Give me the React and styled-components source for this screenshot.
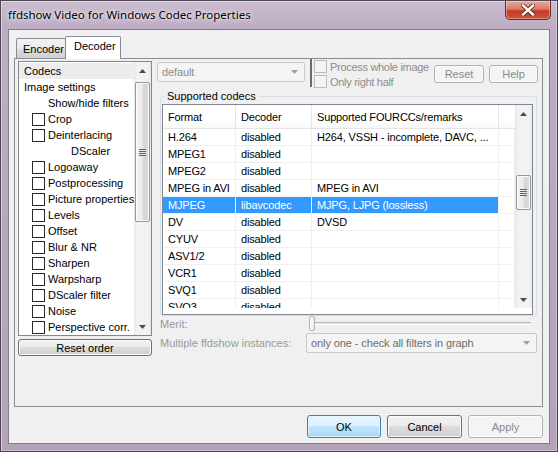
import React from 'react'
import styled, { createGlobalStyle, css } from 'styled-components'

const GlobalStyle = createGlobalStyle`
  html, body {
    margin: 0;
    padding: 0;
  }
  body {
    width: 558px;
    height: 452px;
    overflow: hidden;
    background: #b7a7bb;
    font-family: "Liberation Sans", Arial, sans-serif;
    font-size: 11px;
  }
  * {
    box-sizing: border-box;
  }
`

const leftItems = [
    { label: 'Codecs', level: 0, selected: true },
    { label: 'Image settings', level: 0 },
    { label: 'Show/hide filters', level: 1 },
    { label: 'Crop', check: true },
    { label: 'Deinterlacing', check: true },
    { label: 'DScaler', level: 2 },
    { label: 'Logoaway', check: true },
    { label: 'Postprocessing', check: true },
    { label: 'Picture properties', check: true },
    { label: 'Levels', check: true },
    { label: 'Offset', check: true },
    { label: 'Blur & NR', check: true },
    { label: 'Sharpen', check: true },
    { label: 'Warpsharp', check: true },
    { label: 'DScaler filter', check: true },
    { label: 'Noise', check: true },
    { label: 'Perspective corr.', check: true },
]

const codecs = [
    ['H.264', 'disabled', 'H264, VSSH - incomplete, DAVC, ...'],
    ['MPEG1', 'disabled', ''],
    ['MPEG2', 'disabled', ''],
    ['MPEG in AVI', 'disabled', 'MPEG in AVI'],
    ['MJPEG', 'libavcodec', 'MJPG, LJPG (lossless)', true],
    ['DV', 'disabled', 'DVSD'],
    ['CYUV', 'disabled', ''],
    ['ASV1/2', 'disabled', ''],
    ['VCR1', 'disabled', ''],
    ['SVQ1', 'disabled', ''],
    ['SVQ3', 'disabled', ''],
]

const columns = [73, 76, 187]

const Arrow = ({ up }) => (
    <svg width="7" height="4" viewBox="0 0 7 4">
        {up
            ? <polygon points="0,4 3.5,0 7,4" fill="#4a4a4a"/>
            : <polygon points="0,0 3.5,4 7,0" fill="#4a4a4a"/>}
    </svg>
)

const ScrollBar = ({ thumbTop, thumbHeight }) => (
    <Scroll>
        <ScrollButton><Arrow up/></ScrollButton>
        <ScrollTrack>
            <Thumb style={{ marginTop: thumbTop, height: thumbHeight }}>
                <Gripper/>
            </Thumb>
        </ScrollTrack>
        <ScrollButton><Arrow/></ScrollButton>
    </Scroll>
)

const DropArrow = () => (
    <svg width="7" height="4" viewBox="0 0 7 4">
        <polygon points="0,0 3.5,4 7,0" fill="#a0a0a0"/>
    </svg>
)

const CloseGlyph = () => (
    <svg width="14" height="12" viewBox="0 0 14 12">
        <path d="M2 1.5 L12 10.5 M12 1.5 L2 10.5" stroke="#5a2a24" strokeWidth="4.2" strokeLinecap="square"/>
        <path d="M2 1.5 L12 10.5 M12 1.5 L2 10.5" stroke="#ffffff" strokeWidth="2.4" strokeLinecap="square"/>
    </svg>
)

export default function App() {
    return (
        <>
            <GlobalStyle/>
            <Window>
                <TitleBar>
                    <Title>ffdshow Video for Windows Codec Properties</Title>
                    <CloseButton><CloseGlyph/></CloseButton>
                </TitleBar>
                <Client>
                    <Tabs>
                        <Tab>Encoder</Tab>
                        <Tab $active>Decoder</Tab>
                    </Tabs>
                    <Panel>
                        <LeftCol>
                            <ListBox>
                                <ListItems>
                                    {leftItems.map((it) => (
                                        <Item key={it.label} $level={it.check ? 'check' : it.level}
                                              $selected={it.selected}>
                                            {it.check && <CheckBox/>}
                                            {it.label}
                                        </Item>
                                    ))}
                                </ListItems>
                                <ScrollBar thumbTop={3} thumbHeight={140}/>
                            </ListBox>
                            <Button $size="small">Reset order</Button>
                        </LeftCol>
                        <RightCol>
                            <TopRow>
                                <Combo $width={148} $top={3}>
                                    <ComboText>default</ComboText>
                                    <DropArrow/>
                                </Combo>
                                <Separator/>
                                <CheckCol>
                                    <CheckRow><CheckBox $disabled/>Process whole image</CheckRow>
                                    <CheckRow><CheckBox $disabled/>Only right half</CheckRow>
                                </CheckCol>
                                <SmallButtons>
                                    <Button $variant="disabled" $size="top" $width={50}>Reset</Button>
                                    <Button $variant="disabled" $size="top" $width={49}>Help</Button>
                                </SmallButtons>
                            </TopRow>
                            <Group>
                                <Legend>Supported codecs</Legend>
                                <ListView>
                                    <ListArea>
                                        <Table>
                                            <HeaderRow>
                                                <HeaderCell $w={columns[0]}>Format</HeaderCell>
                                                <HeaderCell $w={columns[1]}>Decoder</HeaderCell>
                                                <HeaderCell $w={columns[2]}>Supported FOURCCs/remarks</HeaderCell>
                                                <HeaderCell $last/>
                                            </HeaderRow>
                                            {codecs.map(([f, d, r, sel]) => (
                                                <Row key={f}>
                                                    <Cell $w={columns[0]} $selected={sel}>{f}</Cell>
                                                    <Cell $w={columns[1]} $selected={sel}>{d}</Cell>
                                                    <Cell $w={columns[2]} $selected={sel}>{r}</Cell>
                                                    <Cell $last/>
                                                </Row>
                                            ))}
                                        </Table>
                                        <ScrollBar thumbTop={53} thumbHeight={35}/>
                                    </ListArea>
                                </ListView>
                            </Group>
                            <FieldRow $height={15}>
                                <FieldLabel $width={149}>Merit:</FieldLabel>
                                <Slider>
                                    <SliderThumb/>
                                    <Groove/>
                                </Slider>
                            </FieldRow>
                            <FieldRow $height={20} $gap={2}>
                                <FieldLabel $width={146}>Multiple ffdshow instances:</FieldLabel>
                                <Combo $width={231}>
                                    <ComboText $dark>only one - check all filters in graph</ComboText>
                                    <DropArrow/>
                                </Combo>
                            </FieldRow>
                        </RightCol>
                    </Panel>
                    <ButtonRow>
                        <Button $variant="default" $width={74}>OK</Button>
                        <Button $width={75}>Cancel</Button>
                        <Button $variant="disabled" $width={75}>Apply</Button>
                    </ButtonRow>
                </Client>
            </Window>
        </>
    )
}

const Window = styled.div`
  width: 558px;
  height: 452px;
  display: flex;
  flex-direction: column;
  border: 1px solid #4e4653;
  background: linear-gradient(to bottom, #cbbdd0 0, #bdacc3 28px, #b4a2b9 100%);
  box-shadow: inset 1px 1px 0 rgba(255, 255, 255, 0.45), inset -1px -1px 0 rgba(255, 255, 255, 0.3);
`

const TitleBar = styled.div`
  height: 28px;
  flex: none;
  display: flex;
  align-items: flex-start;
  justify-content: space-between;
  padding-left: 7px;
`

const Title = styled.div`
  font-family: "Noto Sans", "Open Sans", sans-serif;
  font-size: 11.5px;
  line-height: 27px;
  color: #000;
  text-shadow: 0 0 6px rgba(255, 255, 255, 0.9), 0 0 3px rgba(255, 255, 255, 0.8);
`

const CloseButton = styled.div`
  width: 46px;
  height: 19px;
  margin-right: 6px;
  display: flex;
  align-items: center;
  justify-content: center;
  border: 1px solid #6b2a22;
  border-top: none;
  border-radius: 0 0 5px 5px;
  background: linear-gradient(to bottom, #e9a898 0%, #db7c66 45%, #c43a25 55%, #d0533a 100%);
  box-shadow: inset 0 0 0 1px rgba(255, 255, 255, 0.35);
`

const Client = styled.div`
  flex: 1;
  margin: 0 7px 7px;
  border: 1px solid #847a89;
  background: #f0f0f0;
  display: flex;
  flex-direction: column;
  padding: 6px 6px 0 5px;
`

const Tabs = styled.div`
  height: 23px;
  flex: none;
  display: flex;
  align-items: flex-end;
  padding-left: 2px;
  margin-bottom: -1px;
  position: relative;
  z-index: 1;
`

const Tab = styled.div`
  height: 20px;
  width: 50px;
  border: 1px solid #898c95;
  border-bottom: none;
  border-radius: 2px 2px 0 0;
  background: linear-gradient(to bottom, #f2f2f2 0%, #ebebeb 50%, #dddddd 50%, #cfcfcf 100%);
  color: #000;
  padding-left: 6px;
  line-height: 20px;
  margin-bottom: 1px;

  ${(p) => p.$active && css`
    height: 23px;
    width: 56px;
    margin-left: -1px;
    margin-bottom: 0;
    background: #ffffff;
    padding-left: 8px;
    line-height: 19px;
  `}
`

const Panel = styled.div`
  height: 349px;
  flex: none;
  border: 1px solid #898c95;
  background: #f0f0f0;
  display: flex;
  padding-left: 3px;
`

const LeftCol = styled.div`
  width: 134px;
  display: flex;
  flex-direction: column;
  gap: 3px;
  padding-top: 2px;
`

const ListBox = styled.div`
  height: 275px;
  display: flex;
  border: 1px solid #828790;
  background: #fff;
`

const ListItems = styled.div`
  flex: 1;
  padding-top: 1px;
  overflow: hidden;
`

const levelPad = { 0: 5, 1: 29, 2: 52, check: 13 }

const Item = styled.div`
  height: 16px;
  display: flex;
  align-items: center;
  gap: 3px;
  white-space: nowrap;
  color: #000;
  padding-left: ${(p) => levelPad[p.$level]}px;
  background: ${(p) => (p.$selected ? '#ececec' : 'transparent')};
`

const CheckBox = styled.span`
  width: 13px;
  height: 13px;
  flex: none;
  border: 1px solid ${(p) => (p.$disabled ? '#bcbcbc' : '#2a2a2a')};
  background: ${(p) => (p.$disabled ? '#f4f4f4' : '#fff')};
`

const Scroll = styled.div`
  width: 17px;
  flex: none;
  display: flex;
  flex-direction: column;
  background: linear-gradient(to right, #e6e6e6 0, #f2f2f2 3px, #f2f2f2 14px, #e9e9e9 100%);
`

const ScrollButton = styled.div`
  height: 17px;
  flex: none;
  display: flex;
  align-items: center;
  justify-content: center;
`

const ScrollTrack = styled.div`
  flex: 1;
  display: flex;
  flex-direction: column;
  align-items: center;
`

const Thumb = styled.div`
  width: 15px;
  display: flex;
  align-items: center;
  justify-content: center;
  border: 1px solid #979797;
  border-radius: 2px;
  background: linear-gradient(to right, #f4f4f4 0%, #e8e8e8 50%, #d6d6d6 51%, #d9d9d9 100%);
  box-shadow: inset 0 0 0 1px #fbfbfb;
`

const Gripper = styled.div`
  width: 7px;
  height: 7px;
  background: repeating-linear-gradient(to bottom, #5f5f5f 0, #5f5f5f 1px, #e8e8e8 1px, #e8e8e8 2px);
`

const RightCol = styled.div`
  width: 382px;
  margin-left: 5px;
  display: flex;
  flex-direction: column;
`

const TopRow = styled.div`
  height: 29px;
  flex: none;
  display: flex;
  align-items: flex-start;
`

const Combo = styled.div`
  width: ${(p) => p.$width}px;
  height: 20px;
  flex: none;
  margin-top: ${(p) => p.$top || 0}px;
  display: flex;
  align-items: center;
  padding: 0 6px 0 4px;
  border: 1px solid #c9c9c9;
  border-radius: 2px;
  background: #f4f4f4;
`

const ComboText = styled.span`
  flex: 1;
  white-space: nowrap;
  overflow: hidden;
  letter-spacing: -0.1px;
  color: ${(p) => (p.$dark ? '#6d6d6d' : '#8d8d8d')};
`

const Separator = styled.div`
  width: 2px;
  height: 28px;
  margin-left: 5px;
  border-left: 2px solid #6a6a6a;
`

const CheckCol = styled.div`
  margin-left: 2px;
  display: flex;
  flex-direction: column;
`

const CheckRow = styled.div`
  height: 15px;
  display: flex;
  align-items: center;
  gap: 3px;
  color: #8d8d8d;
  white-space: nowrap;
  letter-spacing: -0.3px;
`

const SmallButtons = styled.div`
  margin-left: auto;
  margin-top: 6px;
  margin-right: 1px;
  display: flex;
  gap: 5px;
`

const buttonVariants = {
    normal: css`
      border: 1px solid #707070;
      color: #000;
      background: linear-gradient(to bottom, #f2f2f2 0%, #ebebeb 50%, #dddddd 50%, #cfcfcf 100%);
      box-shadow: inset 0 0 0 1px #fbfbfb;
    `,
    default: css`
      border: 1px solid #3c7fb1;
      color: #000;
      background: linear-gradient(to bottom, #eaf6fd 0%, #d9f0fc 50%, #bee6fd 50%, #a7d9f5 100%);
      box-shadow: inset 0 0 0 1px #e4f4fc;
    `,
    disabled: css`
      border: 1px solid #adb2b5;
      color: #8a8a8a;
      background: #f4f4f4;
      box-shadow: inset 0 0 0 1px #fcfcfc;
    `,
}

const buttonSizes = { normal: 23, small: 17, top: 18 }

const Button = styled.div`
  ${(p) => buttonVariants[p.$variant || 'normal']}
  width: ${(p) => (p.$width ? `${p.$width}px` : 'auto')};
  height: ${(p) => buttonSizes[p.$size || 'normal']}px;
  flex: none;
  border-radius: 3px;
  display: flex;
  align-items: center;
  justify-content: center;
  white-space: nowrap;
`

const Group = styled.fieldset`
  margin: 2px 2px 0 3px;
  padding: 1px 3px 0 1px;
  border: 1px solid #d5dfe5;
  border-radius: 3px;
  min-width: 0;
`

const Legend = styled.legend`
  margin-left: 3px;
  padding: 0 2px;
  color: #000;
  line-height: 13px;
`

const ListView = styled.div`
  height: 211px;
  border: 1px solid #828790;
  background: #fff;
`

const ListArea = styled.div`
  height: 203px;
  display: flex;
`

const Table = styled.div`
  flex: 1;
  overflow: hidden;
  letter-spacing: -0.15px;
`

const HeaderRow = styled.div`
  height: 24px;
  display: flex;
  background: linear-gradient(to bottom, #ffffff 0%, #ffffff 60%, #f7f8f9 100%);
  border-bottom: 1px solid #e5e5e5;
`

const HeaderCell = styled.div`
  width: ${(p) => (p.$last ? 'auto' : `${p.$w}px`)};
  flex: ${(p) => (p.$last ? 1 : 'none')};
  display: flex;
  align-items: center;
  padding-left: 5px;
  border-right: ${(p) => (p.$last ? 'none' : '1px solid #e5e5e5')};
  color: #000;
  white-space: nowrap;
`

const Row = styled.div`
  height: 17px;
  display: flex;
`

const Cell = styled.div`
  width: ${(p) => (p.$last ? 'auto' : `${p.$w}px`)};
  flex: ${(p) => (p.$last ? 1 : 'none')};
  display: flex;
  align-items: center;
  padding-left: 5px;
  white-space: nowrap;
  overflow: hidden;
  border-right: 1px solid #f0f0f0;
  border-bottom: 1px solid #f0f0f0;
  background: ${(p) => (p.$selected ? '#3399ff' : 'transparent')};
  color: ${(p) => (p.$selected ? '#fff' : '#000')};
`

const FieldRow = styled.div`
  height: ${(p) => p.$height}px;
  flex: none;
  margin-top: ${(p) => p.$gap || 0}px;
  padding-left: 3px;
  display: flex;
  align-items: center;
`

const FieldLabel = styled.div`
  width: ${(p) => p.$width}px;
  flex: none;
  color: #9a9a9a;
  white-space: nowrap;
`

const Slider = styled.div`
  width: 222px;
  height: 15px;
  display: flex;
  align-items: center;
`

const SliderThumb = styled.div`
  width: 6px;
  height: 15px;
  flex: none;
  border: 1px solid #b4b4b4;
  border-radius: 2px;
  background: linear-gradient(to right, #fbfbfb, #ececec);
`

const Groove = styled.div`
  flex: 1;
  height: 3px;
  border-top: 1px solid #b6b6b6;
  border-bottom: 1px solid #ffffff;
  background: #e7e7e7;
`

const ButtonRow = styled.div`
  margin-top: 8px;
  display: flex;
  justify-content: flex-end;
  gap: 6px;
`
